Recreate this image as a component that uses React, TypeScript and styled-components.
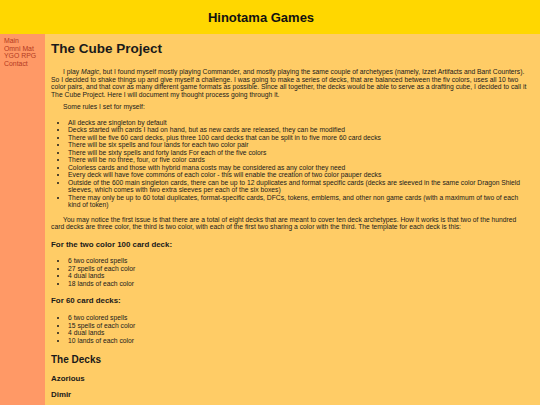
import React, { FC } from "react"
import styled, { createGlobalStyle } from "styled-components"

const GlobalStyle = createGlobalStyle`
  html, body {
    margin: 0;
    padding: 0;
    overflow: hidden;
    background: #ffcc66;
    font-family: "Liberation Sans", Arial, sans-serif;
    color: #1a1a1a;
  }
`

const Header = styled.header`
  height: 34px;
  background: #ffd700;
  display: flex;
  align-items: center;
  justify-content: center;
  padding-right: 18px;
`

const SiteTitle = styled.h1`
  margin: 0;
  font-size: 13px;
  font-weight: bold;
  color: #111;
`

const Layout = styled.div`
  display: flex;
  min-height: calc(100vh - 34px);
`

const Sidebar = styled.nav`
  width: 45px;
  flex-shrink: 0;
  background: #ff9966;
  padding: 3px 0 0 4px;
  box-sizing: border-box;
  display: flex;
  flex-direction: column;
`

const NavLink = styled.a`
  font-size: 6.9px;
  line-height: 7.6px;
  color: #b33a22;
  text-decoration: none;
`

const Main = styled.main`
  flex: 1;
  padding: 0 12px 0 6px;
`

const Title = styled.h1`
  margin: 7px 0 11px;
  font-size: 13.5px;
  line-height: 16px;
`

const Para = styled.p<{ $indent?: boolean; $gap?: number }>`
  margin: ${(p) => p.$gap ?? 0}px 0 0;
  font-size: 6.75px;
  line-height: 7.5px;
  text-indent: ${(p) => (p.$indent ? "12px" : "0")};
`

const List = styled.ul<{ $gap?: number }>`
  margin: ${(p) => p.$gap ?? 8.5}px 0 0;
  padding-left: 17px;
  font-size: 6.75px;
  line-height: 7.45px;
`

const SubHead = styled.h3<{ $gap?: number }>`
  margin: ${(p) => p.$gap ?? 9}px 0 0;
  font-size: 7.9px;
  line-height: 9px;
`

const Section = styled.h2`
  margin: 9.5px 0 0;
  font-size: 10px;
  line-height: 12px;
`

const rules = [
  "All decks are singleton by default",
  "Decks started with cards I had on hand, but as new cards are released, they can be modified",
  "There will be five 60 card decks, plus three 100 card decks that can be split in to five more 60 card decks",
  "There will be six spells and four lands for each two color pair",
  "There will be sixty spells and forty lands For each of the five colors",
  "There will be no three, four, or five color cards",
  "Colorless cards and those with hybrid mana costs may be considered as any color they need",
  "Every deck will have fove commons of each color - this will enable the creation of two color pauper decks",
  "Outside of the 600 main singleton cards, there can be up to 12 duplicates and format specific cards (decks are sleeved in the same color Dragon Shield sleeves, which comes with two extra sleeves per each of the six boxes)",
  "There may only be up to 60 total duplicates, format-specific cards, DFCs, tokens, emblems, and other non game cards (with a maximum of two of each kind of token)",
]

const hundred = ["6 two colored spells", "27 spells of each color", "4 dual lands", "18 lands of each color"]
const sixty = ["6 two colored spells", "15 spells of each color", "4 dual lands", "10 lands of each color"]

const App: FC = () => {
  return (
    <>
      <GlobalStyle />
      <Header>
        <SiteTitle>Hinotama Games</SiteTitle>
      </Header>
      <Layout>
        <Sidebar>
          <NavLink href="#">Main</NavLink>
          <NavLink href="#">Omni Mat</NavLink>
          <NavLink href="#">YGO RPG</NavLink>
          <NavLink href="#">Contact</NavLink>
        </Sidebar>
        <Main>
          <Title>The Cube Project</Title>
          <Para $indent>
            I play <em>Magic</em>, but I found myself mostly playing Commander, and mostly playing the same
            couple of archetypes (namely, Izzet Artifacts and Bant Counters). So I decided to shake things up
            and give myself a challenge. I was going to make a series of decks, that are balanced between the
            fiv colors, uses all 10 two color pairs, and that covr as many different game formats as possible.
            Since all together, the decks would be able to serve as a drafting cube, I decided to call it The
            Cube Project. Here I will document my thought process going through it.
          </Para>
          <Para $indent $gap={5}>Some rules I set for myself:</Para>
          <List $gap={8.5}>
            {rules.map((r) => (
              <li key={r}>{r}</li>
            ))}
          </List>
          <Para $indent $gap={7.5}>
            You may notice the first issue is that there are a total of eight decks that are meant to cover ten
            deck archetypes. How it works is that two of the hundred card decks are three color, the third is two
            color, with each of the first two sharing a color with the third. The template for each deck is this:
          </Para>
          <SubHead>For the two color 100 card deck:</SubHead>
          <List>
            {hundred.map((r) => (
              <li key={r}>{r}</li>
            ))}
          </List>
          <SubHead>For 60 card decks:</SubHead>
          <List $gap={9}>
            {sixty.map((r) => (
              <li key={r}>{r}</li>
            ))}
          </List>
          <Section>The Decks</Section>
          <SubHead $gap={8}>Azorious</SubHead>
          <SubHead $gap={7}>Dimir</SubHead>
        </Main>
      </Layout>
    </>
  )
}

export default App
